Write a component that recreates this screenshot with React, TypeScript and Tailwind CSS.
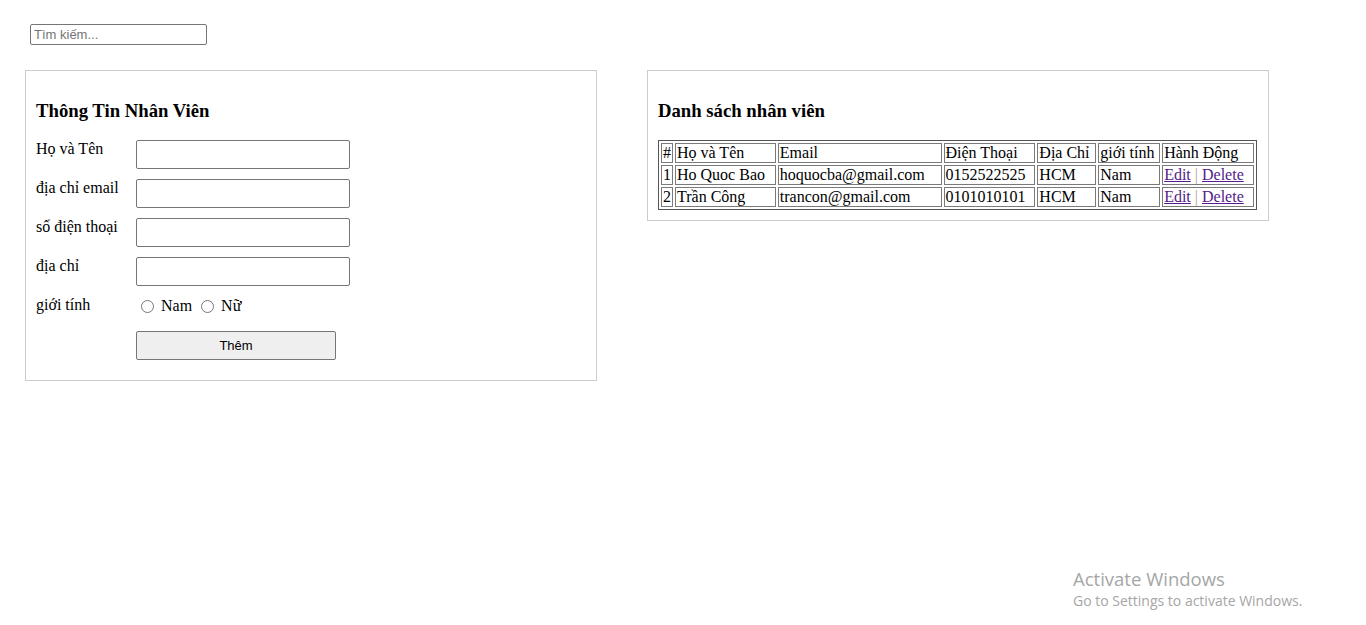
import React from 'react';

const serif = { fontFamily: '"Liberation Serif", "Times New Roman", serif' };

const employees = [
  { id: 1, name: 'Ho Quoc Bao', email: 'hoquocba@gmail.com', phone: '0152522525', address: 'HCM', gender: 'Nam' },
  { id: 2, name: 'Trần Công', email: 'trancon@gmail.com', phone: '0101010101', address: 'HCM', gender: 'Nam' },
];

const fields = ['Họ và Tên', 'địa chỉ email', 'số điện thoại', 'địa chỉ'];

// cột của bảng: tiêu đề + độ rộng
const columns = [
  { label: '#', w: 'w-[12px]' },
  { label: 'Họ và Tên', w: 'w-[101px]' },
  { label: 'Email', w: 'w-[164px]' },
  { label: 'Điện Thoại', w: 'w-[92px]' },
  { label: 'Địa Chỉ', w: 'w-[59px]' },
  { label: 'giới tính', w: 'w-[62px]' },
  { label: 'Hành Động', w: 'w-[92px]' },
];

const cell = 'border border-[#7a7a7a] px-[1px] h-[20px] leading-[18px] text-left font-normal whitespace-nowrap';

const App: React.FC = () => {
  return (
    <div className="relative min-h-[625px] bg-white text-black text-[16px]" style={serif}>
      {/* Ô tìm kiếm */}
      <div className="pt-[24px] pl-[30px]">
        <input
          placeholder="Tìm kiếm..."
          className="block w-[177px] h-[21px] border border-[#767676] rounded-[2px] px-[3px] text-[13px] placeholder:text-[#757575] outline-none"
          style={{ fontFamily: '"Liberation Sans", Arial, sans-serif' }}
        />
      </div>

      <div className="flex items-start gap-[50px] pl-[25px] mt-[25px]">
        {/* Form thông tin */}
        <div className="w-[572px] border border-[#cccccc] p-[10px]">
          <h3 className="text-[18.72px] font-bold leading-[22px] my-[18.5px]">Thông Tin Nhân Viên</h3>
          {fields.map((f) => (
            <div key={f} className="flex items-start mb-[10px]">
              <label className="w-[100px] leading-[18px]">{f}</label>
              <input className="w-[214px] h-[29px] border border-[#767676] rounded-[2px] px-[3px] outline-none" />
            </div>
          ))}
          <div className="flex items-start h-[25px] mb-[10px]">
            <label className="w-[100px] leading-[18px]">giới tính</label>
            <div className="flex items-center h-[20px] pl-[5px]">
              <span className="w-[13px] h-[13px] rounded-full border border-[#767676] mr-[7px]" />
              <span>Nam</span>
              <span className="w-[13px] h-[13px] rounded-full border border-[#767676] ml-[9px] mr-[7px]" />
              <span>Nữ</span>
            </div>
          </div>
          <div className="pl-[100px] mb-[10px]">
            <button
              className="w-[200px] h-[29px] border border-[#767676] rounded-[2px] bg-[#efefef] text-[13px] text-black"
              style={{ fontFamily: '"Liberation Sans", Arial, sans-serif' }}
            >
              Thêm
            </button>
          </div>
        </div>

        {/* Danh sách */}
        <div className="w-[622px] border border-[#cccccc] p-[10px]">
          <h3 className="text-[18.72px] font-bold leading-[22px] my-[18.5px]">Danh sách nhân viên</h3>
          <table className="border-separate border-spacing-[2px] border border-[#555] w-[599px]">
            <thead>
              <tr>
                {columns.map((c) => (
                  <td key={c.label} className={`${cell} ${c.w}`}>{c.label}</td>
                ))}
              </tr>
            </thead>
            <tbody>
              {employees.map((e) => (
                <tr key={e.id}>
                  <td className={cell}>{e.id}</td>
                  <td className={cell}>{e.name}</td>
                  <td className={cell}>{e.email}</td>
                  <td className={cell}>{e.phone}</td>
                  <td className={cell}>{e.address}</td>
                  <td className={cell}>{e.gender}</td>
                  <td className={cell}>
                    <a href="#" className="text-[#551a8b] underline">Edit</a>
                    <span className="text-[#b9a092]"> | </span>
                    <a href="#" className="text-[#551a8b] underline">Delete</a>
                  </td>
                </tr>
              ))}
            </tbody>
          </table>
        </div>
      </div>

      {/* watermark */}
      <div
        className="absolute left-[1073px] top-[566px] text-[#a6a6a6] pointer-events-none"
        style={{ fontFamily: '"Open Sans", "Noto Sans", sans-serif' }}
      >
        <div className="text-[18.5px] leading-[25px]">Activate Windows</div>
        <div className="text-[14px] leading-[20px]">Go to Settings to activate Windows.</div>
      </div>
    </div>
  );
};

export default App;
